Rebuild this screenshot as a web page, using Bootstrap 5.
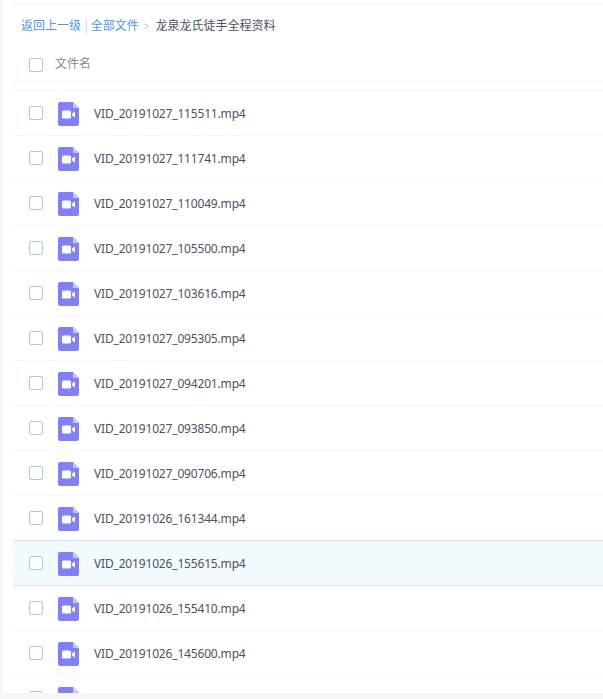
<!DOCTYPE html>
<html lang="zh-CN">
<head>
  <meta charset="UTF-8">
  <title>全部文件</title>
  <link href="https://cdn.jsdelivr.net/npm/bootstrap@5.3.3/dist/css/bootstrap.min.css" rel="stylesheet">
  <style>
    html, body { height: 100%; overflow: hidden; }
    body {
      background: #f7f7f8;
      font-family: "Noto Sans", "Noto Sans CJK SC", sans-serif;
      font-size: 12px;
      color: #4a5266;
    }
    .panel {
      margin-left: 3px;
      height: 693px;
      background: #fff;
      overflow: hidden;
      padding: 4px 0 0 10px;
    }
    .crumbs {
      border-top: 1px solid #f2f3f6;
      height: 36px;
      padding: 12px 0 0 8px;
      line-height: 17px;
    }
    .crumbs a { color: #4d97e6; text-decoration: none; }
    .crumbs .sep { color: #c5d9f0; margin: 0 1px 0 2px; }
    .crumbs .arrow { color: #c0c6d2; margin: 0 6px 0 5px; font-size: 10px; }
    .head-row {
      height: 42px;
      padding: 9px 0 0 16px;
      border-bottom: 1px solid #f2f3f6;
      color: #888;
    }
    .gap-strip { height: 8px; }
    .file-row {
      height: 45px;
      border-top: 1px solid #f2f6fa;
      padding-left: 16px;
    }
    .file-row.active-row {
      background: #f3fafe;
      border-top: 1px solid #c9e8f8;
      box-shadow: 0 1px 0 #c9e8f8;
      position: relative;
    }
    .tick {
      width: 14px;
      height: 14px;
      border: 1px solid #a8cbe8;
      border-radius: 2px;
      background: #fff;
      flex: none;
    }
    .head-row .tick { margin-right: 12px; }
    .head-label { margin-top: -2px; }
    .file-icon { width: 21px; height: 24px; margin: 1px 15px 0 15px; flex: none; }
    .file-name { padding-top: 2px; letter-spacing: -.17px; }
  </style>
</head>
<body>
  <div class="panel">
    <div class="crumbs">
      <a href="#">返回上一级</a><span class="sep">|</span><a href="#">全部文件</a><span class="arrow">&gt;</span><span>龙泉龙氏徒手全程资料</span>
    </div>
    <div class="head-row d-flex align-items-center">
      <span class="tick"></span><span class="head-label">文件名</span>
    </div>
    <div class="gap-strip"></div>

    <div class="file-row d-flex align-items-center"><span class="tick"></span><svg class="file-icon" viewBox="0 0 21 24"><use href="#vid"/></svg><span class="file-name">VID_20191027_115511.mp4</span></div>
    <div class="file-row d-flex align-items-center"><span class="tick"></span><svg class="file-icon" viewBox="0 0 21 24"><use href="#vid"/></svg><span class="file-name">VID_20191027_111741.mp4</span></div>
    <div class="file-row d-flex align-items-center"><span class="tick"></span><svg class="file-icon" viewBox="0 0 21 24"><use href="#vid"/></svg><span class="file-name">VID_20191027_110049.mp4</span></div>
    <div class="file-row d-flex align-items-center"><span class="tick"></span><svg class="file-icon" viewBox="0 0 21 24"><use href="#vid"/></svg><span class="file-name">VID_20191027_105500.mp4</span></div>
    <div class="file-row d-flex align-items-center"><span class="tick"></span><svg class="file-icon" viewBox="0 0 21 24"><use href="#vid"/></svg><span class="file-name">VID_20191027_103616.mp4</span></div>
    <div class="file-row d-flex align-items-center"><span class="tick"></span><svg class="file-icon" viewBox="0 0 21 24"><use href="#vid"/></svg><span class="file-name">VID_20191027_095305.mp4</span></div>
    <div class="file-row d-flex align-items-center"><span class="tick"></span><svg class="file-icon" viewBox="0 0 21 24"><use href="#vid"/></svg><span class="file-name">VID_20191027_094201.mp4</span></div>
    <div class="file-row d-flex align-items-center"><span class="tick"></span><svg class="file-icon" viewBox="0 0 21 24"><use href="#vid"/></svg><span class="file-name">VID_20191027_093850.mp4</span></div>
    <div class="file-row d-flex align-items-center"><span class="tick"></span><svg class="file-icon" viewBox="0 0 21 24"><use href="#vid"/></svg><span class="file-name">VID_20191027_090706.mp4</span></div>
    <div class="file-row d-flex align-items-center"><span class="tick"></span><svg class="file-icon" viewBox="0 0 21 24"><use href="#vid"/></svg><span class="file-name">VID_20191026_161344.mp4</span></div>
    <div class="file-row active-row d-flex align-items-center"><span class="tick"></span><svg class="file-icon" viewBox="0 0 21 24"><use href="#vid"/></svg><span class="file-name">VID_20191026_155615.mp4</span></div>
    <div class="file-row d-flex align-items-center"><span class="tick"></span><svg class="file-icon" viewBox="0 0 21 24"><use href="#vid"/></svg><span class="file-name">VID_20191026_155410.mp4</span></div>
    <div class="file-row d-flex align-items-center"><span class="tick"></span><svg class="file-icon" viewBox="0 0 21 24"><use href="#vid"/></svg><span class="file-name">VID_20191026_145600.mp4</span></div>
    <div class="file-row d-flex align-items-center"><span class="tick"></span><svg class="file-icon" viewBox="0 0 21 24"><use href="#vid"/></svg></div>
  </div>

  <svg width="0" height="0" class="d-block">
    <defs>
      <g id="vid">
        <path d="M2 0H15L21 6V22a2 2 0 0 1-2 2H2a2 2 0 0 1-2-2V2a2 2 0 0 1 2-2Z" fill="#8180f4"/>
        <path d="M15 0L21 6H15Z" fill="#c5c4fb"/>
        <rect x="4" y="8.5" width="9" height="8" rx="1.5" fill="#fff"/>
        <path d="M14 11.5L17 9.5V15.5L14 13.5Z" fill="#fff"/>
      </g>
    </defs>
  </svg>

  <script src="https://cdn.jsdelivr.net/npm/bootstrap@5.3.3/dist/js/bootstrap.bundle.min.js"></script>
</body>
</html>
